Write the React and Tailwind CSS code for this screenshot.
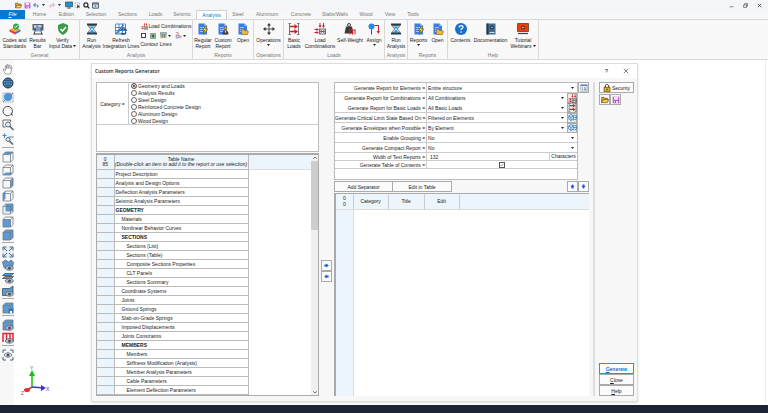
import { useState } from "react";

const categories = [
    "Geometry and Loads",
    "Analysis Results",
    "Steel Design",
    "Reinforced Concrete Design",
    "Aluminum Design",
    "Wood Design",
];

// level: indentation of the item, bold: group header
const reportTables = [
    { name: "Project Description", level: 0 },
    { name: "Analysis and Design Options", level: 0 },
    { name: "Deflection Analysis Parameters", level: 0 },
    { name: "Seismic Analysis Parameters", level: 0 },
    { name: "GEOMETRY", level: 0, bold: true },
    { name: "Materials", level: 1 },
    { name: "Nonlinear Behavior Curves", level: 1 },
    { name: "SECTIONS", level: 1, bold: true },
    { name: "Sections (List)", level: 2 },
    { name: "Sections (Table)", level: 2 },
    { name: "Composite Sections Properties", level: 2 },
    { name: "CLT Panels", level: 2 },
    { name: "Sections Summary", level: 2 },
    { name: "Coordinate Systems", level: 1 },
    { name: "Joints", level: 1 },
    { name: "Ground Springs", level: 1 },
    { name: "Slab-on-Grade Springs", level: 1 },
    { name: "Imposed Displacements", level: 1 },
    { name: "Joints Constraints", level: 1 },
    { name: "MEMBERS", level: 1, bold: true },
    { name: "Members", level: 2 },
    { name: "Stiffness Modification (Analysis)", level: 2 },
    { name: "Member Analysis Parameters", level: 2 },
    { name: "Cable Parameters", level: 2 },
    { name: "Element Deflection Parameters", level: 2 },
    { name: "Plates", level: 1 },
];

const indents = ["pl-px", "pl-[7px]", "pl-[12px]"];

const options = [
    { id: "elements", label: "Generate Report for Elements =", value: "Entire structure" },
    { id: "combinations", label: "Generate Report for Combinations =", value: "All Combinations", icon: "loads", joined: true },
    { id: "basic", label: "Generate Report for Basic Loads =", value: "All Basic Loads", icon: "basic" },
    { id: "critical", label: "Generate Critical Limit State Based On =", value: "Filtered on Elements", icon: "filter" },
    { id: "envelopes", label: "Generate Envelopes when Possible =", value: "By Element", icon: "filter" },
    { id: "grouping", label: "Enable Grouping =", value: "No" },
    { id: "compact", label: "Generate Compact Report =", value: "No" },
];

const tabs = [
    { name: "Home", width: "w-[27px]" },
    { name: "Edition", width: "w-[27px]" },
    { name: "Selection", width: "w-[32px]" },
    { name: "Sections", width: "w-[31px]" },
    { name: "Loads", width: "w-[25px]" },
    { name: "Seismic", width: "w-[28px]" },
    { name: "Analysis", width: "w-[31px]" },
    { name: "Steel", width: "w-[22px]" },
    { name: "Aluminum", width: "w-[36px]" },
    { name: "Concrete", width: "w-[32px]" },
    { name: "Slabs/Walls", width: "w-[36px]" },
    { name: "Wood", width: "w-[26px]" },
    { name: "View", width: "w-[22px]" },
    { name: "Tools", width: "w-[24px]" },
];

const Svg = ({ className = "size-3", children }) => (
    <svg viewBox="0 0 24 24" fill="none" className={`shrink-0 ${className}`} aria-hidden="true">{children}</svg>
);

const Caret = () => (
    <svg viewBox="0 0 6 4" className="w-[3px] h-[2px] shrink-0" aria-hidden="true"><path d="M0 0h6L3 4z" fill="#222" /></svg>
);

const Hourglass = () => (
    <Svg>
        <path d="M2 1h20v4H2zM2 19h20v4H2z" fill="#2b3c4d" />
        <path d="M5 5h14c0 4-4 5-4 7s4 3 4 7H5c0-4 4-5 4-7S5 9 5 5z" fill="#d5effb" stroke="#2b3c4d" strokeWidth="1.5" />
        <path d="M7 7h10l-5 5zM12 13l5 6H7z" fill="#2a9bd8" />
    </Svg>
);

const Page = ({ children, className }) => (
    <Svg className={className}>
        <path d="M3 1h12l5 5v17H3z" fill="#3b7de0" />
        <path d="M15 1l5 5h-5z" fill="#a9c9f7" />
        <path d="M6 9h8M6 13h8M6 17h6" stroke="#c5dafa" strokeWidth="1.5" />
        {children}
    </Svg>
);

const Bolt = () => <path d="M17 6l-6 9h4l-2 8 9-11h-5l3-6z" fill="#ffd21c" stroke="#3c3517" strokeWidth="1" />;
const SmallFolder = () => <path d="M9 22V13h5l1 2h6v2h2l-2 6H9z" fill="#f0b73e" stroke="#7a5712" strokeWidth="1" />;

const Folder = ({ className }) => (
    <Svg className={className}>
        <path d="M2 20V4h7l2 3h9v4" fill="#e0ad2d" stroke="#5c4509" strokeWidth="2" />
        <path d="M2 20l4-9h17l-4 9z" fill="#f8d25c" stroke="#5c4509" strokeWidth="2" />
    </Svg>
);

const Save = ({ className }) => (
    <Svg className={className}>
        <path d="M2 2h20v20H2z" fill="#c45bd0" />
        <path d="M6 2h12v9H6zM7 15h10v7H7z" fill="#f8e9fa" />
        <path d="M9 16h3v5H9z" fill="#9b3aa8" />
    </Svg>
);

const LoadComb = ({ className }) => (
    <Svg className={className}>
        <path d="M12 0v7M19 0v7M1 13h6M1 19h6" stroke="#d3202e" strokeWidth="2" />
        <path d="M9 5h6l-3 5zM16 5h6l-3 5zM5 10l5 3-5 3zM5 16l5 3-5 3z" fill="#d3202e" />
        <path d="M11 12h12v10H11zM11 12l12 10M23 12L11 22M11 17h12" stroke="#555" strokeWidth="1.6" />
    </Svg>
);

const BasicLoads = ({ className }) => (
    <Svg className={className}>
        <path d="M3 1v22M21 1v22M1 1h5M1 23h5M18 1h5M18 23h5" stroke="#777" strokeWidth="2" />
        <path d="M4 7h11M4 17h11" stroke="#d3202e" strokeWidth="3" />
        <path d="M13 2l7 5-7 5zM13 12l7 5-7 5z" fill="#d3202e" />
    </Svg>
);

const Filter = ({ className }) => (
    <Svg className={className}>
        <path d="M2 8l6-4 6 4v8l-6 4-6-4zM2 8l6 4 6-4M8 12v8" fill="#d9ecfb" stroke="#2b7cc4" strokeWidth="2" />
        <path d="M12 6h6a5 6 0 010 12h-6M14 12h9" stroke="#2b7cc4" strokeWidth="2" />
    </Svg>
);

const Arrow = ({ left }) => (
    <svg viewBox="0 0 24 24" className={`size-[5px] shrink-0 ${left ? "rotate-180" : ""}`} aria-hidden="true">
        <path d="M2 7h9V2l12 10-12 10v-5H2z" fill="#2459d6" />
    </svg>
);

const optionIcons = {
    loads: <LoadComb className="size-[9px]" />,
    basic: <BasicLoads className="size-[9px]" />,
    filter: <Filter className="size-[9px]" />,
};

const RibbonButton = ({ width, icon, lines, menu }) => (
    <button className={`${width} flex flex-col items-center text-[5px] leading-[6px] text-[#222] whitespace-nowrap`}>
        {icon}
        <span className="pt-[2px]">{lines[0]}</span>
        <span className="flex items-center gap-px min-h-[4px]">{lines[1]}{menu && <Caret />}</span>
    </button>
);

const RibbonGroup = ({ title, width, children }) => (
    <section className={`${width} flex flex-col justify-between border-r border-[#d8d8d8] pt-[3px] pb-px`}>
        <div className="flex justify-center">{children}</div>
        <h2 className="text-center text-[5px] leading-[6px] text-[#777]">{title}</h2>
    </section>
);

const TitleBar = () => (
    <header className="h-[10px] flex items-center justify-between pl-[14px] pr-[6px] bg-[#f4f5f8]">
        <div className="flex items-center">
            <button aria-label="Open" className="w-[9px] flex justify-center"><Folder className="size-[7px]" /></button>
            <button aria-label="Save" className="w-[9px] flex justify-center"><Save className="size-[7px]" /></button>
            <button aria-label="Undo" className="w-4 pl-px flex items-center gap-[3px]">
                <Svg className="size-[6px]"><path d="M4 12h11c7 0 6 9 1 10M10 4l-8 8 8 8" stroke="#3c72d8" strokeWidth="4" /></Svg>
                <Caret />
            </button>
            <button aria-label="Redo" className="w-4 pl-px flex items-center gap-[3px]">
                <Svg className="size-[6px]"><path d="M20 12H9c-7 0-6 9-1 10M14 4l8 8-8 8" stroke="#dcaaaa" strokeWidth="4" /></Svg>
                <Caret />
            </button>
            <button aria-label="Display" className="w-[9px] flex justify-center"><Svg className="size-[8px]"><path d="M1 3h22v14H1z" fill="#2d8fc9" stroke="#25455c" strokeWidth="2" /><path d="M7 21h10" stroke="#25455c" strokeWidth="3" /></Svg></button>
            <button aria-label="Select" className="w-[9px] flex justify-center"><Svg className="size-[7px]"><path d="M3 3h16v16H3z" stroke="#777" strokeWidth="2" strokeDasharray="3 3" /><path d="M11 8v14l4-4h6z" fill="#333" /></Svg></button>
            <button aria-label="Search" className="w-[9px] flex justify-center"><Svg className="size-[7px]"><circle cx="10" cy="10" r="7" stroke="#222" strokeWidth="4" /><path d="M15 15l7 7" stroke="#222" strokeWidth="4" /></Svg></button>
            <button aria-label="View window" className="w-[9px] flex justify-center"><Svg className="size-[7px]"><path d="M2 3h20v18H2zM2 7h20" stroke="#31424f" strokeWidth="3" /><circle cx="12" cy="14" r="4" fill="#4ba0ce" /></Svg></button>
        </div>
        <div className="flex items-center gap-[9px]">
            <button aria-label="Minimize"><Svg className="size-[5px]"><path d="M3 18h18" stroke="#444" strokeWidth="3" /></Svg></button>
            <button aria-label="Restore"><Svg className="size-[5px]"><path d="M3 9h14v12H3zM8 8V3h14v12h-4" stroke="#444" strokeWidth="3" /></Svg></button>
            <button aria-label="Close window"><Svg className="size-[5px]"><path d="M4 4l16 16M20 4L4 20" stroke="#444" strokeWidth="4" /></Svg></button>
        </div>
    </header>
);

const TabBar = () => (
    <nav className="h-[10px] flex items-stretch bg-[#f6f7f8] border-b border-[#d8d8d8] text-[5px] leading-[9px] text-[#777]">
        <button className="w-[25px] bg-[#0078d7] text-white italic mr-px"><u>F</u>ile</button>
        {tabs.map((tab) => (
            <button
                key={tab.name}
                className={`${tab.width} ${tab.name === "Analysis" ? "bg-white border-x border-t border-[#d0d0d0] text-[#0078d7] leading-[8px]" : ""}`}
            >
                {tab.name}
            </button>
        ))}
    </nav>
);

const Ribbon = () => (
    <div className="h-10 flex bg-[#f8f8f8] border-b border-[#d8d8d8]">
        <RibbonGroup title="General" width="w-[80px]">
            <RibbonButton width="w-[26px]" lines={["Codes and", "Standards"]} icon={
                <Svg>
                    <path d="M1 13l11-4 11 4-11 5z" fill="#f5a62a" />
                    <path d="M1 13v4l11 6v-5z" fill="#e33d3d" /><path d="M23 13v4l-11 6v-5z" fill="#3b7de0" />
                    <circle cx="14" cy="7" r="6" fill="#35a853" /><path d="M11 7l2 2 4-4" stroke="white" strokeWidth="2" />
                </Svg>
            } />
            <RibbonButton width="w-[20px]" lines={["Results", "Bar"]} icon={
                <Svg><path d="M1 2h22v13H1z" fill="#54606c" /><path d="M4 4h5v6H4zM11 4h8v5h-8z" fill="#bfcbd8" /><path d="M4 23l3-10M20 23l-3-10M3 22h18" stroke="#3a4148" strokeWidth="2" /><path d="M8 10h9v7H8z" fill="#7ba1ce" /></Svg>
            } />
            <RibbonButton width="w-[30px]" lines={["Verify", "Input Data"]} menu icon={
                <Svg><path d="M12 0l10 4v7c0 6-4 10-10 13C6 21 2 17 2 11V4z" fill="#3d9a4b" /><path d="M7 12l4 4 7-8" stroke="white" strokeWidth="3" /></Svg>
            } />
        </RibbonGroup>
        <RibbonGroup title="Analysis" width="w-[113px]">
            <RibbonButton width="w-[20px]" lines={["Run", "Analysis"]} icon={<Hourglass />} />
            <RibbonButton width="w-[39px]" lines={["Refresh", "Integration Lines"]} icon={
                <Svg><path d="M1 2h20v20H1zM1 9h20M1 15h20M8 2v20M15 2v20" stroke="#3f78bd" strokeWidth="1.7" /><path d="M2 22L17 4" stroke="#3f78bd" strokeWidth="3" /><path d="M12 15a6 6 0 0111 1M22 19a6 6 0 01-10 1" stroke="#1e4f8f" strokeWidth="3" /></Svg>
            } />
            <div className="w-[50px] flex flex-col gap-[2px] text-[5px] leading-[7px] text-[#222] whitespace-nowrap">
                <button className="flex items-center gap-px"><LoadComb className="size-[7px]" />Load Combinations</button>
                <div className="flex items-center gap-1">
                    <input type="checkbox" aria-label="Show contours" className="appearance-none size-[5px] border border-[#444] bg-white" />
                    <button aria-label="Fill"><Svg className="size-[6px]"><path d="M2 2h20v20H2z" fill="#9bc7a2" stroke="#555" strokeWidth="2" /><path d="M7 7h10v10H7z" fill="#296b36" /></Svg></button>
                    <button aria-label="Contour table" className="flex items-center gap-px"><Svg className="size-[7px]"><path d="M1 2h21v19H1z" fill="#d9c478" /><path d="M1 2h21v6H1zM8 8v13M15 8v13M1 14h21" stroke="#4874a8" strokeWidth="2" /></Svg><Caret /></button>
                    <button aria-label="Contour shape" className="flex items-center gap-px"><Svg className="size-[7px]"><path d="M3 2h8v12l10 4" stroke="#d35353" strokeWidth="2" /><path d="M4 10h7v11H4z" fill="#cfdcf0" stroke="#5d7cae" strokeWidth="2" /><circle cx="17" cy="16" r="5" fill="#e79a9a" /></Svg><Caret /></button>
                </div>
                <button className="text-left">Contour Lines</button>
            </div>
        </RibbonGroup>
        <RibbonGroup title="Reports" width="w-[61px]">
            <RibbonButton width="w-[20px]" lines={["Regular", "Report"]} icon={<Page><Bolt /></Page>} />
            <RibbonButton width="w-[20px]" lines={["Custom", "Report"]} icon={
                <Page><circle cx="17" cy="10" r="3" fill="#e2a33b" stroke="#6b4a10" /><path d="M11 23c0-6 3-9 6-9s6 3 6 9z" fill="#4b4132" /><path d="M15 15h4l-2 6z" fill="#ffcf40" /></Page>
            } />
            <RibbonButton width="w-[20px]" lines={["Open"]} icon={<Page><SmallFolder /></Page>} />
        </RibbonGroup>
        <RibbonGroup title="Operations" width="w-[30px]">
            <RibbonButton width="w-[28px]" lines={["Operations"]} menu icon={
                <Svg><path d="M12 3v6M12 15v6M3 12h6M15 12h6" stroke="#333" strokeWidth="2" /><path d="M12 0l4 5H8zM12 24l4-5H8zM0 12l5-4v8zM24 12l-5-4v8z" fill="#333" /><circle cx="12" cy="12" r="2" stroke="#333" strokeWidth="1.5" /></Svg>
            } />
        </RibbonGroup>
        <RibbonGroup title="Loads" width="w-[101px]">
            <RibbonButton width="w-[20px]" lines={["Basic", "Loads"]} icon={<BasicLoads />} />
            <RibbonButton width="w-[32px]" lines={["Load", "Combinations"]} icon={<LoadComb />} />
            <RibbonButton width="w-[28px]" lines={["Self-Weight"]} icon={
                <Svg><path d="M4 7h12l3 14H1z" fill="#3a3a3a" /><circle cx="10" cy="4" r="3" stroke="#3a3a3a" strokeWidth="2" /><path d="M11 14h12M12 14v9M17 14v9M22 14v9" stroke="#d3202e" strokeWidth="2" /></Svg>
            } />
            <RibbonButton width="w-[20px]" lines={["Assign"]} menu icon={
                <Svg><circle cx="7" cy="7" r="6" fill="#2a86e8" /><path d="M7 13v10M13 5h8v13" stroke="#4a4a4a" strokeWidth="2" /><path d="M21 5v13" stroke="#d3202e" strokeWidth="2" /><path d="M17 16h7l-3 6z" fill="#d3202e" /></Svg>
            } />
        </RibbonGroup>
        <RibbonGroup title="Analysis" width="w-[23px]">
            <RibbonButton width="w-[20px]" lines={["Run", "Analysis"]} icon={<Hourglass />} />
        </RibbonGroup>
        <RibbonGroup title="Reports" width="w-[40px]">
            <RibbonButton width="w-[20px]" lines={["Reports"]} menu icon={<Page><Bolt /></Page>} />
            <RibbonButton width="w-[18px]" lines={["Open"]} icon={<Page><SmallFolder /></Page>} />
        </RibbonGroup>
        <RibbonGroup title="Help" width="w-[91px]">
            <RibbonButton width="w-[23px]" lines={["Contents"]} icon={
                <Svg><circle cx="12" cy="12" r="12" fill="#1670c9" /><path d="M8 9c0-5 8-5 8-1 0 3-4 3-4 6" stroke="white" strokeWidth="2.5" /><circle cx="12" cy="18" r="1.6" fill="white" /></Svg>
            } />
            <RibbonButton width="w-[37px]" lines={["Documentation"]} icon={
                <Svg><path d="M3 1h18v22H3z" fill="#456d91" /><path d="M3 1h4v22H3z" fill="#26384b" /><circle cx="14" cy="9" r="4" fill="#26384b" /><circle cx="14" cy="9" r="1.5" fill="#c9dced" /><path d="M9 19h10" stroke="#c9dced" strokeWidth="2" /></Svg>
            } />
            <RibbonButton width="w-[28px]" lines={["Tutorial", "Webinars"]} menu icon={
                <Svg><path d="M1 1h22v16H1z" fill="#ec3d0c" stroke="#5e3427" strokeWidth="1.5" /><circle cx="12" cy="9" r="4" fill="#5e3427" /><path d="M11 7l3 2-3 2z" fill="white" /><path d="M2 21h20" stroke="#444" strokeWidth="2.5" /></Svg>
            } />
        </RibbonGroup>
    </div>
);

// faces of the box used by the view orientation buttons
const faces = {
    front: "M2 7h15v15H2z",
    back: "M7 2h15v15H7z",
    top: "M2 7l5-5h15l-5 5z",
    bottom: "M2 22l5-5h15l-5 5z",
    right: "M17 7l5-5v15l-5 5z",
    left: "M2 7l5-5v15l-5 5z",
};

const Cube = ({ filled, children }) => (
    <Svg>
        {filled.map((face) => <path key={face} d={faces[face]} fill="#5b9bd5" />)}
        <path d="M2 7h15v15H2zM2 7l5-5h15l-5 5M22 2v15l-5 5" stroke="#6b7680" strokeWidth="1.5" />
        {children}
    </Svg>
);

const Eye = () => (
    <>
        <path d="M6 18c4-7 14-7 17 0-3 6-13 6-17 0z" fill="#aebac4" stroke="#56636f" strokeWidth="1.5" />
        <circle cx="15" cy="18" r="3" fill="#46525d" />
    </>
);

const solid = ["front", "top", "right"];

const viewTools = [
    [
        { name: "Pan", size: "h-[14px]", icon: <Svg><path d="M7 22L2 13l2-1 3 3V5h2v6l1-8h2v8l2-7h2v8l3-5 1 1-3 14z" fill="#fff" stroke="#888" strokeWidth="1.5" /></Svg> },
        { name: "Orbit", size: "h-[14px]", icon: <Svg><circle cx="12" cy="12" r="10" fill="#5b9bd5" stroke="#234" strokeWidth="2" /><path d="M2 12h20M12 2v20M4 7h16M4 17h16M12 2c-7 6-7 14 0 20M12 2c7 6 7 14 0 20" stroke="#234" strokeWidth="1" /></Svg> },
        { name: "Free orbit", size: "h-[14px]", icon: <Svg><path d="M2 4h20v18H2z" stroke="#aaa" strokeWidth="1.5" /><circle cx="12" cy="12" r="8" fill="#4d93d9" /><path d="M2 22l6-6M22 4l-4 4" stroke="#777" strokeWidth="2" /></Svg> },
        { name: "Rotate", size: "h-[14px]", icon: <Svg><path d="M15 21a9.5 9.5 0 114-3" stroke="#555" strokeWidth="2" /><path d="M22 21l-6-1 3-5z" fill="#555" /></Svg> },
        { name: "Zoom window", size: "h-[14px]", icon: <Svg><path d="M17 6V2H2v14h5" stroke="#555" strokeWidth="1.7" /><circle cx="12" cy="11" r="5" fill="#dfeaf3" stroke="#555" strokeWidth="1.7" /><path d="M15 14l8 8" stroke="#44617c" strokeWidth="3" /></Svg> },
        { name: "Zoom in", size: "h-[14px]", icon: <Svg><path d="M5 1v9M1 5h8M13 8h10" stroke="#3c87d0" strokeWidth="2" /><circle cx="12" cy="13" r="4" fill="#dfeaf3" stroke="#555" strokeWidth="1.7" /><path d="M15 16l7 7" stroke="#44617c" strokeWidth="3" /></Svg> },
    ],
    [
        { name: "Top view", icon: <Cube filled={["top"]} /> },
        { name: "Bottom view", icon: <Cube filled={["bottom"]} /> },
        { name: "Right view", icon: <Cube filled={["right"]} /> },
        { name: "Left view", icon: <Cube filled={["left"]} /> },
        { name: "Back view", icon: <Cube filled={["back"]} /> },
        { name: "Front view", icon: <Cube filled={["front"]} /> },
        { name: "Solid view", icon: <Cube filled={solid} /> },
    ],
    [
        { name: "Zoom extents", icon: <Svg><path d="M2 2h20v20H2z" fill="#e3edf5" /><path d="M2 9V2h7M15 2h7v7M22 15v7h-7M9 22H2v-7M3 3l7 7M21 3l-7 7M3 21l7-7M21 21l-7-7" stroke="#46647e" strokeWidth="2" /></Svg> },
        { name: "Show selection", icon: <Svg><path d="M1 6l6-4 6 4 5-4 5 5-2 9-9 6-8-5z" fill="#5b9bd5" stroke="#56636f" strokeWidth="1.5" /><Eye /></Svg> },
        { name: "Show level", icon: <Svg><path d="M1 7l5-4h17l-4 4zM1 13l5-4h17l-4 4z" fill="#5b9bd5" stroke="#444" strokeWidth="1.5" /><Eye /></Svg> },
        { name: "Show plane", icon: <Svg><path d="M1 7h14l7-5v14l-6 5H1z" fill="#5b9bd5" stroke="#444" strokeWidth="1.5" /><Eye /></Svg> },
    ],
    [{ name: "Save view", icon: <Cube filled={solid}><path d="M13 13h10v10H13z" fill="#3d78ad" /><path d="M16 18h4v5h-4z" fill="white" /></Cube> }],
    [
        { name: "Show objects", icon: <Cube filled={solid}><Eye /></Cube> },
        { name: "Show loads", icon: <Svg><path d="M2 20V3h20v17M9 3v15M16 3v15" stroke="#e02a35" strokeWidth="3" /><Eye /></Svg> },
    ],
    [{ name: "Show all", icon: <Svg><path d="M2 8V2h6M16 2h6v6M22 16v6h-6M8 22H2v-6" stroke="#46647e" strokeWidth="2" /><path d="M4 12c4-6 12-6 16 0-4 6-12 6-16 0z" fill="#d9dfe4" stroke="#56636f" strokeWidth="1.5" /><circle cx="12" cy="12" r="3" fill="#46525d" /></Svg> }],
];

const ViewToolbar = () => (
    <aside className="w-[14px] shrink-0 bg-[#f7f7f7]">
        {viewTools.map((group, i) => (
            <div key={i} className={`flex flex-col ml-[2px] pt-[2px] pb-px ${i < viewTools.length - 1 ? "border-b border-[#aaa]" : ""}`}>
                {group.map((tool) => (
                    <button key={tool.name} aria-label={tool.name} className={`${tool.size || "h-[13px]"} flex items-center justify-center`}>{tool.icon}</button>
                ))}
            </div>
        ))}
    </aside>
);

const CategoryPanel = () => {
    const [category, setCategory] = useState(categories[0]);

    return (
        <div className="h-[70px] bg-white border border-[#bbb]">
            <fieldset className="h-[42px] flex items-center border-b border-[#ccc]">
                <span className="w-[31px] text-center">Category =</span>
                <div className="h-full flex flex-col border-l border-[#ccc] pl-[2px]">
                    {categories.map((name) => (
                        <label key={name} className="h-[7px] flex items-center gap-px">
                            <input
                                type="radio"
                                name="category"
                                checked={category === name}
                                onChange={() => setCategory(name)}
                                className="appearance-none size-[6px] rounded-full border border-[#666] bg-white checked:bg-[#333] checked:shadow-[inset_0_0_0_1px_#ffffff]"
                            />
                            {name}
                        </label>
                    ))}
                </div>
            </fieldset>
        </div>
    );
};

const TablesList = () => (
    <div className="flex-1 min-h-0 mt-px flex bg-white border border-t-2 border-[#aaa]">
        <div className="flex-1 min-w-0 overflow-hidden">
            <table className="w-full border-collapse table-fixed whitespace-nowrap">
                <colgroup>
                    <col className="w-[17px]" />
                    <col className="w-[134px]" />
                    <col />
                </colgroup>
                <thead>
                    <tr className="h-[14px] bg-[#edf5fc] leading-[5px]">
                        <th className="font-normal border-r border-b border-[#bbb] p-0">0<br />85</th>
                        <th className="font-normal border-r border-b border-[#bbb] p-0">Table Name<br /><i>(Double-click an item to add it to the report or use selection)</i></th>
                        <td className="border-b border-[#ddd]"></td>
                    </tr>
                </thead>
                <tbody>
                    {reportTables.map((row) => (
                        <tr key={row.name} className="h-[9px]">
                            <td className="bg-[#edf5fc] border-r border-b border-[#bbb]"></td>
                            <td className={`p-0 border-r border-b border-[#bbb] ${indents[row.level]} ${row.bold ? "font-bold" : ""}`}>{row.name}</td>
                            <td></td>
                        </tr>
                    ))}
                </tbody>
            </table>
        </div>
        <div className="w-[7px] flex flex-col items-center bg-[#f0f0f0]">
            <Svg className="size-[6px]"><path d="M5 15l7-7 7 7" stroke="#444" strokeWidth="3" /></Svg>
            <div className="w-full h-[69px] bg-[#cdcdcd]"></div>
            <div className="flex-1"></div>
            <Svg className="size-[6px]"><path d="M5 9l7 7 7-7" stroke="#444" strokeWidth="3" /></Svg>
        </div>
    </div>
);

const squareButton = "size-[11px] flex items-center justify-center bg-[#fbfbfb] border border-[#aaa]";

const OptionsPanel = () => (
    <div className="flex items-start whitespace-nowrap">
        <form className="flex-1 h-[98px] bg-white border border-[#bbb]">
            {options.map((option) => (
                <div key={option.id} className={`h-[10px] flex items-center ${option.joined ? "" : "border-b border-[#ccc]"}`}>
                    <label htmlFor={option.id} className="w-[90px] text-right">{option.label}</label>
                    <select id={option.id} className="appearance-none flex-1 h-full ml-px pl-px border-l border-[#ccc]">
                        <option>{option.value}</option>
                    </select>
                    <span className="px-[3px] flex"><Caret /></span>
                    {option.icon && <button type="button" aria-label={option.value} className="size-[10px] flex items-center justify-center bg-[#eee] border border-[#aaa]">{optionIcons[option.icon]}</button>}
                </div>
            ))}
            <div className="h-[8px] flex items-center border-b border-[#ccc]">
                <label htmlFor="width" className="w-[90px] text-right">Width of Text Reports =</label>
                <input id="width" defaultValue="132" className="flex-1 min-w-0 h-full ml-px pl-[3px] border-l border-[#ccc]" />
                <span className="h-full w-[28px] text-center border-l border-[#ccc]">Characters</span>
            </div>
            <div className="h-[8px] flex items-center border-b border-[#ccc]">
                <label htmlFor="contents" className="w-[90px] text-right">Generate Table of Contents =</label>
                <div className="flex-1 h-full ml-px flex items-center justify-center border-l border-[#ccc] relative">
                    <input id="contents" type="checkbox" defaultChecked className="appearance-none size-[6px] border border-[#555] bg-white" />
                    <Svg className="size-[6px] absolute pointer-events-none"><path d="M6 12l4 4 8-9" stroke="#333" strokeWidth="2" /></Svg>
                </div>
            </div>
        </form>
        <button aria-label="Report settings" className={squareButton}>
            <Svg className="size-[8px]"><path d="M2 2h20v20H2z" fill="#e8f1fa" stroke="#8aa0b8" strokeWidth="2" /><path d="M2 4h20" stroke="#3674b5" strokeWidth="3" /><path d="M6 12h3M12 12h7M6 17h3M12 17h7" stroke="#555" strokeWidth="2" /></Svg>
        </button>
    </div>
);

const ReportTable = () => (
    <div className="flex-1 bg-white border-l-2 border-t border-[#aaa] flex flex-col">
        <table className="w-full h-full border-collapse table-fixed">
            <colgroup>
                <col className="w-[17px]" />
                <col className="w-[35px]" />
                <col className="w-[36px]" />
                <col className="w-[35px]" />
                <col />
            </colgroup>
            <thead>
                <tr className="h-[15px] bg-[#edf5fc] border-b border-[#ddd]">
                    <th className="p-0 font-normal border-r border-[#ccc]">0<br />0</th>
                    <th className="p-0 font-normal border-r border-[#ccc]">Category</th>
                    <th className="p-0 font-normal border-r border-[#ccc]">Title</th>
                    <th className="p-0 font-normal border-r border-[#ccc]">Edit</th>
                    <td></td>
                </tr>
            </thead>
            <tbody>
                <tr>
                    <td className="bg-[#edf5fc] border-r border-[#ddd]"></td>
                    <td colSpan="4"></td>
                </tr>
            </tbody>
        </table>
    </div>
);

const ReportsDialog = () => (
    <div role="dialog" aria-label="Custom Reports Generator" className="flex-1 min-w-0 flex flex-col bg-[#f7f7f7] border border-[#ddd] shadow-sm text-[5px] leading-[6px] text-[#222]">
        <div className="h-[14px] flex items-center justify-between bg-white pl-[3px] pr-2">
            <h1 className="font-['Open_Sans',sans-serif] font-semibold">Custom Reports Generator</h1>
            <div className="flex items-center gap-[15px]">
                <button aria-label="Dialog help" className="text-[6px]">?</button>
                <button aria-label="Close dialog"><Svg className="size-[6px]"><path d="M3 3l18 18M21 3L3 21" stroke="#333" strokeWidth="2.5" /></Svg></button>
            </div>
        </div>
        <div className="flex-1 min-h-0 grid grid-cols-[7fr_15px_8fr_auto] pt-1 pl-1 pr-[3px] pb-[5px]">
            <div className="flex flex-col min-w-0 h-0 min-h-full">
                <CategoryPanel />
                <TablesList />
            </div>
            <div className="flex flex-col items-center justify-center pt-[64px]">
                <button aria-label="Add to report" className={squareButton}><Arrow /></button>
                <button aria-label="Remove from report" className={squareButton}><Arrow left /></button>
            </div>
            <div className="flex flex-col min-w-0">
                <OptionsPanel />
                <div className="flex justify-between mt-px mb-px">
                    <div className="flex">
                        <button className="w-[59px] h-[11px] border border-[#aaa] bg-[#fbfbfb]">Add Separator</button>
                        <button className="w-[59px] h-[11px] border border-l-0 border-[#aaa] bg-[#fbfbfb]">Edit in Table</button>
                    </div>
                    <div className="flex">
                        <button aria-label="Move up" className={squareButton}><span className="-rotate-90"><Arrow /></span></button>
                        <button aria-label="Move down" className={squareButton}><span className="rotate-90"><Arrow /></span></button>
                    </div>
                </div>
                <ReportTable />
            </div>
            <div className="flex flex-col justify-between ml-1 pl-1 border-l-2 border-[#ddd]">
                <div className="flex flex-col gap-px">
                    <button className="w-[35px] h-[11px] flex items-center justify-center gap-px border border-[#aaa] bg-[#fbfbfb]">
                        <Svg className="size-[8px]"><path d="M7 11V6c0-6 10-6 10 0v5" stroke="#333" strokeWidth="3" /><path d="M3 10h18v13H3z" fill="#e9b51f" stroke="#4b3b0b" strokeWidth="2" /><path d="M12 14v5" stroke="#222" strokeWidth="3" /></Svg>
                        Security
                    </button>
                    <div className="flex">
                        <button aria-label="Open template" className={squareButton}><Folder className="size-[8px]" /></button>
                        <button aria-label="Save template" className={squareButton}><Save className="size-[8px]" /></button>
                    </div>
                </div>
                <div className="flex flex-col">
                    <button className="w-[35px] h-[11px] border border-[#2c8fe0] bg-white text-[#0078d7] font-bold"><u>G</u>enerate</button>
                    <button className="w-[35px] h-[11px] border border-[#aaa] bg-[#fbfbfb]"><u>C</u>lose</button>
                    <button className="w-[35px] h-[11px] border border-[#aaa] bg-[#fbfbfb]"><u>H</u>elp</button>
                </div>
            </div>
        </div>
    </div>
);

const App = () => {
    return (
        <div className="min-h-screen flex flex-col bg-white font-['Liberation_Sans',Arial,sans-serif]">
            <TitleBar />
            <TabBar />
            <Ribbon />
            <main className="flex-1 flex">
                <ViewToolbar />
                <div className="w-[77px] shrink-0 flex items-end pl-1 pb-[9px]">
                    <svg viewBox="0 0 36 30" className="w-9 h-[30px]" aria-label="Axes">
                        <path d="M14 21V7" stroke="#17c217" strokeWidth="1.5" />
                        <path d="M14 4l3 6h-6z" fill="#17c217" />
                        <path d="M14 21l12 1" stroke="#3535d0" strokeWidth="1.5" />
                        <path d="M28 22l-5-3v6z" fill="#3535d0" />
                        <path d="M14 21l-5 3" stroke="#d33" strokeWidth="1.5" />
                        <ellipse cx="9" cy="24" rx="3" ry="2" fill="#d33" />
                        <text x="12" y="4" fontSize="5" fill="#3a6b3a">Y</text>
                        <text x="28" y="25" fontSize="5" fill="#3535d0">X</text>
                        <text x="3" y="29" fontSize="5" fill="#d33">Z</text>
                    </svg>
                </div>
                <div className="flex-1 min-w-0 flex pt-[3px] pb-[3px]">
                    <ReportsDialog />
                </div>
                <div className="w-[130px] shrink-0 flex justify-end pr-[2px]"><div className="border-r border-[#eee]"></div></div>
            </main>
            <footer className="h-2 bg-[#1b2433]"></footer>
        </div>
    );
};

export default App;
